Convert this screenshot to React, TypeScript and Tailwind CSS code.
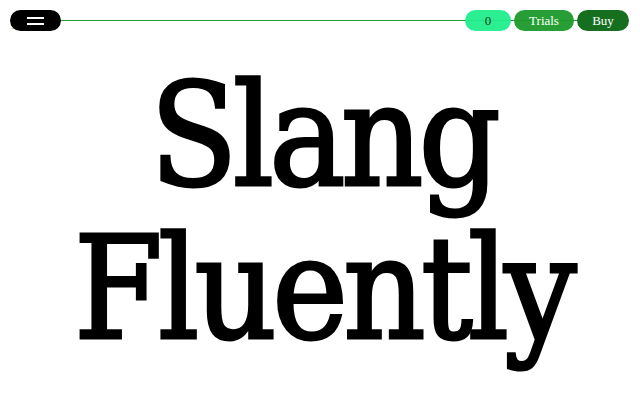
import React from 'react';

const serif = "font-['Liberation_Serif',_'Times_New_Roman',_serif]";

export default function App() {
  return (
    <div className={`relative w-[640px] h-[400px] overflow-hidden bg-white ${serif}`}>
      {/* top bar */}
      <div className="relative h-[41px]">
        <div className="absolute left-[56px] right-[60px] top-[20px] h-px bg-[#1f9e2e]" />
        <span className="absolute left-[11px] top-[24px] text-[7px] leading-none text-[#2aa83a]">3</span>
        <div className="relative flex items-center justify-between px-[10px] pt-[10px]">
          <button className="flex h-[21px] w-[51px] flex-col items-center justify-center gap-[4px] rounded-full bg-black">
            <span className="block h-[2px] w-[17px] bg-white" />
            <span className="block h-[2px] w-[17px] bg-white" />
          </button>
          <div className="flex items-center gap-[3px] pr-px">
            <button className="h-[21px] w-[46px] rounded-full bg-[#20ee8a]/95 text-[13px] leading-none text-[#0b3d1a]">0</button>
            <button className="h-[21px] w-[60px] rounded-full bg-[#1b9a2b]/95 text-[13px] leading-none text-white">Trials</button>
            <button className="h-[21px] w-[52px] rounded-full bg-[#156f1f] text-[13px] leading-none text-white">Buy</button>
          </div>
        </div>
      </div>

      {/* headline */}
      <h1 className="mt-[18px] pl-[6px] text-center font-['DejaVu_Serif_Condensed',_'DejaVu_Serif',_serif] font-stretch-condensed text-[142px] font-normal leading-[153px] tracking-[-4.5px] text-black [-webkit-text-stroke:3px_black]">
        Slang
        <br />
        Fluently
      </h1>
    </div>
  );
}
